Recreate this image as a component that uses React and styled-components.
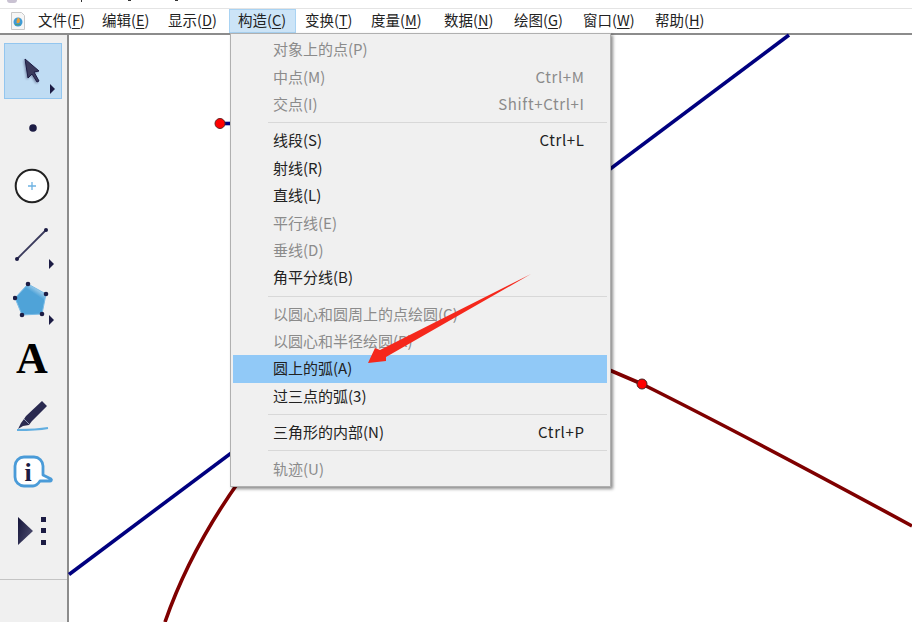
import React from "react";
import styled, { createGlobalStyle } from "styled-components";

const Global = createGlobalStyle`
  html, body { margin: 0; padding: 0; background: #fff; }
  body { font-family: "Noto Sans CJK SC", "Liberation Sans", sans-serif; overflow: hidden; }
`;
const Page = styled.div`
  position: relative; width: 912px; height: 622px; overflow: hidden;
  display: flex; flex-direction: column; background: #fff;
`;
const TitleStrip = styled.div`
  height: 8px; background: #fff; border-bottom: 1px solid #e4e4e4; flex: none;
  display: flex; align-items: flex-start; overflow: hidden; padding-left: 7px;
`;
const TitleMark = styled.span`
  flex: none; width: ${p => p.$w}px; height: ${p => p.$h}px; margin-right: ${p => p.$gap}px;
  background: ${p => p.$c || "#333"};
  border-radius: ${p => (p.$round ? "0 0 6px 6px" : "0")};
`;
const MenuBar = styled.div`
  height: 24px; flex: none; display: flex; align-items: stretch; background: #fff;
  border-bottom: 2px solid #8c8c8c; padding-left: 10px;
`;
const AppIcon = styled.div`
  width: 19px; display: flex; align-items: center; justify-content: flex-start;
`;
const MenuItem = styled.div`
  display: flex; align-items: center; width: ${p => p.$w}px; padding: 0 0 3px 9px; box-sizing: border-box;
  font-size: 14.5px; color: #222; white-space: nowrap;
  background: ${p => (p.$open ? "#cce4f7" : "transparent")};
  box-shadow: ${p => (p.$open ? "inset 0 0 0 1px #a9d3f3" : "none")};
  u { text-underline-offset: 2px; }
`;
const Body = styled.div`
  flex: 1; display: flex; min-height: 0;
`;
const ToolBar = styled.div`
  width: 67px; flex: none; background: #f0f0f0; border-right: 2px solid #8c8c8c;
  display: flex; flex-direction: column;
`;
const Tools = styled.div`
  flex: 1; padding: 8px 4px 0; display: flex; flex-direction: column;
`;
const Tool = styled.div`
  width: 58px; height: ${p => p.$h || 58}px; flex: none; position: relative;
  display: flex; align-items: center; justify-content: center;
  ${p => p.$active && "background:#bfdcf3; box-shadow: inset 0 0 0 1px #93c6ef;"}
`;
const Caret = styled.span`
  position: absolute; right: ${p => p.$r ?? 8}px; bottom: ${p => p.$b ?? 4}px;
  width: 0; height: 0; border-left: 5px solid #1c1c44;
  border-top: 5px solid transparent; border-bottom: 5px solid transparent;
`;
const ToolFoot = styled.div`
  height: 42px; flex: none; border-top: 1px solid #c4c4c4;
`;
const LetterTool = styled.span`
  font: 700 44px/1 "Liberation Serif", serif; color: #000; margin-right: 2px;
`;
const CursorIcon = styled.svg`
  filter: drop-shadow(-1px 1px 1px rgba(40, 40, 80, .45));
`;
const Canvas = styled.div`
  flex: 1; position: relative; background: #fff;
`;
const Drawing = styled.svg`
  position: absolute; left: 0; top: 0; display: block;
`;
const Menu = styled.div`
  position: absolute; left: 230px; top: 33px; width: 381px; height: 454px;
  background: #f0f0f0; border: 1px solid #b0b0b0; padding: 2px 3px 2px 2px; box-sizing: border-box;
  box-shadow: 2px 2px 3px rgba(0,0,0,.45);
  display: flex; flex-direction: column;
`;
const Row = styled.div`
  height: 27.4px; flex: none; display: flex; align-items: center; justify-content: space-between;
  padding: 0 23px 2px 40px; box-sizing: border-box; font-size: 15px;
  color: ${p => (p.$off ? "#8b8b8b" : "#222")};
  background: ${p => (p.$hot ? "#91c9f7" : "transparent")};
`;
const Shortcut = styled.span`
  letter-spacing: 0.65px; margin-right: -0.65px;
`;
const Sep = styled.div`
  height: 1px; background: #d8d8d8; margin: 4px 0 4px 35px; flex: none;
`;
const Arrow = styled.svg`
  position: absolute; left: 0; top: 0; pointer-events: none;
`;

const menuNames = [
  ["文件", "F", 64], ["编辑", "E", 66], ["显示", "D", 70], ["构造", "C", 67], ["变换", "T", 66],
  ["度量", "M", 73], ["数据", "N", 70], ["绘图", "G", 69], ["窗口", "W", 72], ["帮助", "H", 66],
];

const groups = [
  [
    { t: "对象上的点(P)", off: true },
    { t: "中点(M)", off: true, k: "Ctrl+M" },
    { t: "交点(I)", off: true, k: "Shift+Ctrl+I" },
  ],
  [
    { t: "线段(S)", k: "Ctrl+L" },
    { t: "射线(R)" },
    { t: "直线(L)" },
    { t: "平行线(E)", off: true },
    { t: "垂线(D)", off: true },
    { t: "角平分线(B)" },
  ],
  [
    { t: "以圆心和圆周上的点绘圆(C)", off: true },
    { t: "以圆心和半径绘圆(R)", off: true },
    { t: "圆上的弧(A)", hot: true },
    { t: "过三点的弧(3)" },
  ],
  [{ t: "三角形的内部(N)", k: "Ctrl+P" }],
  [{ t: "轨迹(U)", off: true }],
];

function AppLogo() {
  return (
    <svg width="16" height="20" viewBox="0 0 16 20">
      <path d="M1.5 1.5h10l3 3v14h-13z" fill="#f6f6f6" stroke="#c8c8c8" />
      <circle cx="8" cy="11" r="4.5" fill="#3f9bd6" />
      <path d="M8 6.500c2 1 2.500 3 1.500 5-1 1-2.500 1-3 0 0-2 .5-3.500 1.500-5z" fill="#e9a13b" />
      <path d="M4.500 13c1.500 1.500 4.500 2 6.500 0-2 .5-4.500.5-6.500 0z" fill="#5aa04a" />
    </svg>
  );
}

const Ink = "#1c1c44";

export default function App() {
  return (
    <Page>
      <Global />
      <TitleStrip>
        <TitleMark $w={10} $h={3} $gap={64} $c="#c9c2d2" $round />
        <TitleMark $w={1} $h={2} $gap={46} />
        <TitleMark $w={3} $h={1} $gap={44} />
        <TitleMark $w={3} $h={1} $gap={0} />
      </TitleStrip>
      <MenuBar>
        <AppIcon><AppLogo /></AppIcon>
        {menuNames.map(([n, k, w]) => (
          <MenuItem key={n} $w={w} $open={n === "构造"}>
            {n}(<u>{k}</u>)
          </MenuItem>
        ))}
      </MenuBar>
      <Body>
        <ToolBar>
          <Tools>
            <Tool $active $h={56}>
              <CursorIcon width="20" height="26" viewBox="0 0 20 26">
                <path d="M2 1L16 13 11 14 16 23 14 24 9 16 5 20z" fill="#3a3a5c" stroke={Ink} strokeWidth="1" />
              </CursorIcon>
              <Caret $r={7} $b={5} />
            </Tool>
            <Tool $h={58}>
              <svg width="10" height="10"><circle cx="5" cy="5" r="3.800" fill={Ink} /></svg>
            </Tool>
            <Tool $h={60}>
              <svg width="38" height="38" viewBox="0 0 38 38">
                <circle cx="18" cy="18" r="16.300" fill="#fff" stroke="#222" strokeWidth="2" />
                <path d="M18 14v8M14 18h8" stroke="#6db2e2" strokeWidth="1.300" />
              </svg>
            </Tool>
            <Tool $h={55}>
              <svg width="38" height="36" viewBox="0 0 38 36">
                <path d="M3 32L32 3" stroke="#3a3a5c" strokeWidth="1.800" />
                <circle cx="3" cy="32" r="2" fill={Ink} />
                <circle cx="32" cy="3" r="2" fill={Ink} />
              </svg>
              <Caret $r={8} $b={3} />
            </Tool>
            <Tool $h={58}>
              <svg width="40" height="40" viewBox="0 0 40 40">
                <defs>
                  <linearGradient id="pg" x1="0.800" y1="0" x2="0.400" y2="0.600">
                    <stop offset="0" stopColor="#e8f2fa" />
                    <stop offset="0.500" stopColor="#4fa3d8" />
                  </linearGradient>
                </defs>
                <path d="M15 3L33 13 29 33 9 34 2 17z" fill="url(#pg)" stroke="#7cbce6" />
                {[[15, 3], [33, 13], [29, 33], [9, 34], [2, 17]].map(([x, y]) => (
                  <circle key={x} cx={x} cy={y} r="2.300" fill={Ink} />
                ))}
              </svg>
              <Caret $r={8} $b={5} />
            </Tool>
            <Tool $h={58}><LetterTool>A</LetterTool></Tool>
            <Tool $h={56}>
              <svg width="34" height="32" viewBox="0 0 34 32">
                <path d="M26 1L31 6 16 21 13 25 7 26 2 29 5 23 8 19 10 16z" fill="#2a2a50" />
                <path d="M8 19l5 5" stroke="#8f97b4" strokeWidth="1" />
                <path d="M1 30c10 0 20 0 31-2" fill="none" stroke="#62aee0" strokeWidth="1.800" />
              </svg>
            </Tool>
            <Tool $h={58}>
              <svg width="42" height="36" viewBox="0 0 42 36">
                <path d="M12 2h10a9 9 0 0 1 9 9v9l8 4c1 1 0 2-1 2h-10c-2 3-4 5-7 5H12a9 9 0 0 1-9-9V11a9 9 0 0 1 9-9z" fill="#fff" stroke="#4a9bd8" strokeWidth="2.800" strokeLinejoin="round" />
                <text x="16" y="26" textAnchor="middle" fontFamily="Liberation Serif, serif" fontWeight="700" fontSize="26" fill="#1c1c44">i</text>
              </svg>
            </Tool>
            <Tool $h={58}>
              <svg width="30" height="28" viewBox="0 0 30 28">
                <defs>
                  <linearGradient id="tg" x1="0" y1="0" x2="1" y2="0.600">
                    <stop offset="0" stopColor="#15153a" />
                    <stop offset="1" stopColor="#4a4a6c" />
                  </linearGradient>
                </defs>
                <path d="M0 0L15 14 0 28z" fill="url(#tg)" />
                <path d="M23 0h5v5h-5zM23 11h5v5h-5zM23 23h5v5h-5z" fill={Ink} />
              </svg>
            </Tool>
          </Tools>
          <ToolFoot />
        </ToolBar>
        <Canvas />
      </Body>
      <Drawing width="912" height="622" viewBox="0 0 912 622">
        <path d="M69 574.500L789 35" stroke="#00007f" strokeWidth="3.600" fill="none" />
        <path d="M220 123.500H240" stroke="#00007f" strokeWidth="3.600" fill="none" />
        <path d="M165 622Q190 550 240 480" stroke="#7f0000" strokeWidth="3.600" fill="none" />
        <path d="M600 366L642 384C730 428 820 476 912 526" stroke="#7f0000" strokeWidth="3.600" fill="none" />
        <circle cx="220" cy="123.500" r="5" fill="#f00" stroke="#622" strokeWidth="1" />
        <circle cx="642" cy="384" r="5" fill="#f00" stroke="#422" strokeWidth="1" />
      </Drawing>
      <Menu>
        {groups.map((g, i) => (
          <React.Fragment key={i}>
            {i > 0 && <Sep />}
            {g.map(r => (
              <Row key={r.t} $off={r.off} $hot={r.hot}>
                <span>{r.t}</span>
                {r.k && <Shortcut>{r.k}</Shortcut>}
              </Row>
            ))}
          </React.Fragment>
        ))}
      </Menu>
      <Arrow width="912" height="622" viewBox="0 0 912 622">
        <path d="M531 274L380 350 375 348 368 363 386 361 386 357z" fill="#f5281c" />
      </Arrow>
    </Page>
  );
}
